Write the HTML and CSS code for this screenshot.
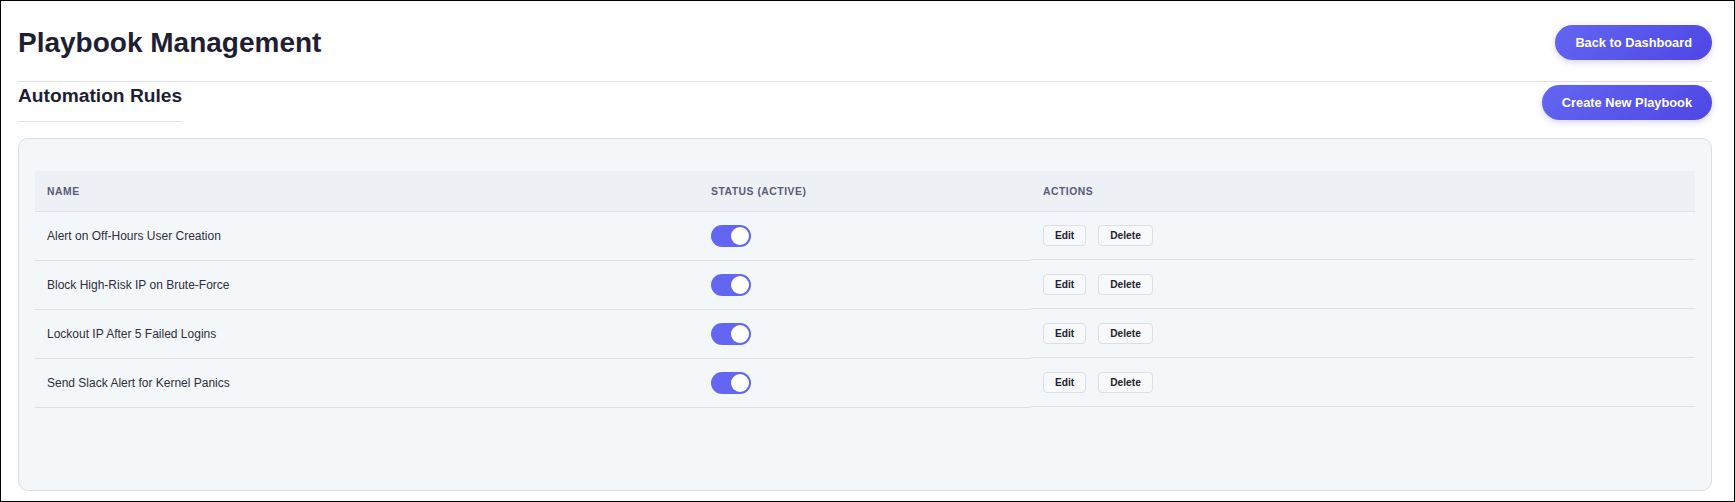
FILE: index.html
```html
<!DOCTYPE html>
<html lang="en">
<head>
<meta charset="UTF-8">
<meta name="viewport" content="width=device-width, initial-scale=1.0">
<title>Playbook Management</title>
<link rel="stylesheet" href="styles.css">
</head>
<body>
    <div class="page">
        <!-- top bar -->
        <div class="header">
            <h1>Playbook Management</h1>
            <button class="btn-primary">Back to Dashboard</button>
        </div>

        <div class="section-head">
            <h2>Automation Rules</h2>
            <button class="btn-primary">Create New Playbook</button>
        </div>

        <!-- rules table -->
        <div class="card">
            <table class="rules">
                <thead>
                    <tr>
                        <th class="col-name">Name</th>
                        <th class="col-status">Status (Active)</th>
                        <th>Actions</th>
                    </tr>
                </thead>
                <tbody>
                    <tr>
                        <td>Alert on Off-Hours User Creation</td>
                        <td><span class="toggle"><span class="knob"></span></span></td>
                        <td class="actions"><button class="btn-small">Edit</button><button class="btn-small">Delete</button></td>
                    </tr>
                    <tr>
                        <td>Block High-Risk IP on Brute-Force</td>
                        <td><span class="toggle"><span class="knob"></span></span></td>
                        <td class="actions"><button class="btn-small">Edit</button><button class="btn-small">Delete</button></td>
                    </tr>
                    <tr>
                        <td>Lockout IP After 5 Failed Logins</td>
                        <td><span class="toggle"><span class="knob"></span></span></td>
                        <td class="actions"><button class="btn-small">Edit</button><button class="btn-small">Delete</button></td>
                    </tr>
                    <tr>
                        <td>Send Slack Alert for Kernel Panics</td>
                        <td><span class="toggle"><span class="knob"></span></span></td>
                        <td class="actions"><button class="btn-small">Edit</button><button class="btn-small">Delete</button></td>
                    </tr>
                </tbody>
            </table>
        </div>
    </div>
</body>
</html>
```

FILE: styles.css
```css
html {
    height: 100%;
    box-sizing: border-box;
    border: 1px solid #000;
    background: #fff;
}

body {
    margin: 0;
    height: 100%;
    font-family: "Liberation Sans", Arial, sans-serif;
    color: #1f1e33;
}

.page {
    height: 100%;
    box-sizing: border-box;
    display: flex;
    flex-direction: column;
    padding: 0 22px 10px 17px;
}

.header {
    display: flex;
    justify-content: space-between;
    align-items: center;
    padding: 24px 0 21px;
    border-bottom: 1px solid #e0e0e4;
}

.header h1 {
    margin: 0;
    font-size: 28px;
    font-weight: bold;
    color: #1f1e33;
}

.section-head {
    display: flex;
    justify-content: space-between;
    align-items: flex-start;
    margin-top: 3px;
}

.section-head h2 {
    margin: 0;
    font-size: 19.2px;
    font-weight: bold;
    color: #1f1e33;
    padding-bottom: 14px;
    border-bottom: 1px solid #e0e0e4;
}

.btn-primary {
    font-family: "Liberation Sans", Arial, sans-serif;
    font-size: 12.8px;
    font-weight: bold;
    color: #fff;
    padding: 10px 20px;
    border: none;
    border-radius: 20px;
    background: linear-gradient(135deg, #6366f1, #4f46e5);
    box-shadow: 0 2px 6px rgba(79, 70, 229, 0.25);
    cursor: pointer;
}

.card {
    flex: 1;
    margin-top: 16px;
    padding: 32px 16px;
    background: #f4f7fa;
    border: 1px solid #dcdfe4;
    border-radius: 10px;
}

.rules {
    width: 100%;
    border-collapse: collapse;
}

.rules th {
    text-align: left;
    padding: 14.5px 12px;
    background: #edf1f5;
    font-size: 10.4px;
    font-weight: bold;
    letter-spacing: 0.5px;
    text-transform: uppercase;
    color: #5a5a7a;
    border-bottom: 1px solid #dde1e6;
}

.rules .col-name {
    width: 40%;
}

.rules .col-status {
    width: 20%;
}

.rules td {
    padding: 13px 12px;
    font-size: 12px;
    color: #2e2e3a;
    border-bottom: 1px solid #dde1e6;
    vertical-align: middle;
}

.rules td.actions {
    display: flex;
    gap: 12px;
}

.toggle {
    display: block;
    position: relative;
    width: 40px;
    height: 22px;
    border-radius: 11px;
    background: #6366f1;
}

.knob {
    position: absolute;
    top: 2px;
    right: 2px;
    width: 18px;
    height: 18px;
    border-radius: 50%;
    background: #fff;
}

.btn-small {
    font-family: "Liberation Sans", Arial, sans-serif;
    font-size: 10.2px;
    font-weight: bold;
    color: #22222e;
    padding: 4px 11px;
    background: #f8f9fb;
    border: 1px solid #dcdfe3;
    border-radius: 4px;
    cursor: pointer;
}
```
